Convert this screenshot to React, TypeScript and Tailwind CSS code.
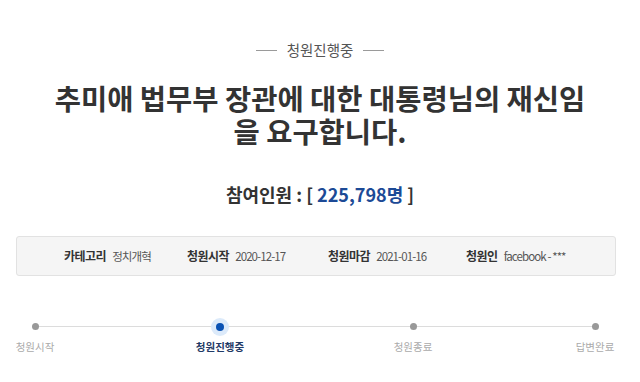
import React from "react";

const FONT = { fontFamily: '"Noto Sans CJK KR", "Noto Sans", sans-serif' };

interface InfoItem {
  label: string;
  value: string;
  width: string;
}

const info: InfoItem[] = [
  { label: "카테고리", value: "정치개혁", width: "w-[123px]" },
  { label: "청원시작", value: "2020-12-17", width: "w-[141px]" },
  { label: "청원마감", value: "2021-01-16", width: "w-[138px]" },
  { label: "청원인", value: "facebook - ***", width: "w-[110px]" },
];

// x offset of each step along the track (px)
const steps = [
  { label: "청원시작", left: "left-[0px]", active: false },
  { label: "청원진행중", left: "left-[185px]", active: true },
  { label: "청원종료", left: "left-[378px]", active: false },
  { label: "답변완료", left: "left-[560px]", active: false },
];

export default function App() {
  return (
    <div className="w-[640px] h-[382px] bg-white overflow-hidden" style={FONT}>
      {/* status tag */}
      <div className="flex items-center justify-center pt-[40px] h-[60px]">
        <span className="w-[21px] h-px bg-[#9a9a9a]" />
        <span className="mx-[10px] text-[14.5px] leading-[20px] text-[#555]">
          청원진행중
        </span>
        <span className="w-[21px] h-px bg-[#9a9a9a]" />
      </div>

      {/* title */}
      <h1 className="mt-[21px] text-center text-[28.5px] font-bold leading-[33px] text-[#333]">
        추미애 법무부 장관에 대한 대통령님의 재신임
        <br />을 요구합니다.
      </h1>

      {/* count */}
      <div className="mt-[34px] text-center text-[18px] font-bold leading-[26px] text-[#333]">
        참여인원 : [ <span className="text-[#1c4a96]">225,798명</span> ]
      </div>

      {/* info box */}
      <div className="ml-[16px] mt-[29px] w-[600px] h-[40px] flex items-center pl-[47px] rounded-[3px] border border-[#e2e2e2] bg-[#f5f5f5] text-[12px] leading-[16px]">
        {info.map((it) => (
          <div key={it.label} className={`${it.width} shrink-0 flex items-center gap-[6px]`}>
            <span className="font-bold text-[#333] tracking-[-0.5px]">{it.label}</span>
            <span className="text-[#555] tracking-[-0.9px] text-[11.5px]">{it.value}</span>
          </div>
        ))}
      </div>

      {/* progress */}
      <div className="relative ml-[35px] mt-[50px] w-[560px] h-px bg-[#dcdcdc]">
        {steps.map((s, i) => (
          <div key={i} className={`absolute top-0 ${s.left} w-0 h-px flex items-center justify-center`}>
            {s.active ? (
              <span className="absolute w-[18px] h-[18px] rounded-full bg-[#dceafa] flex items-center justify-center">
                <span className="w-[8px] h-[8px] rounded-full bg-[#0a52b4]" />
              </span>
            ) : (
              <span className="absolute w-[7px] h-[7px] rounded-full bg-[#999]" />
            )}
            <span
              className={`absolute top-[14px] whitespace-nowrap text-[10.5px] leading-[14px] ${
                s.active ? "font-bold text-[#1f3a66]" : "text-[#aaa]"
              }`}
            >
              {s.label}
            </span>
          </div>
        ))}
      </div>
    </div>
  );
}
